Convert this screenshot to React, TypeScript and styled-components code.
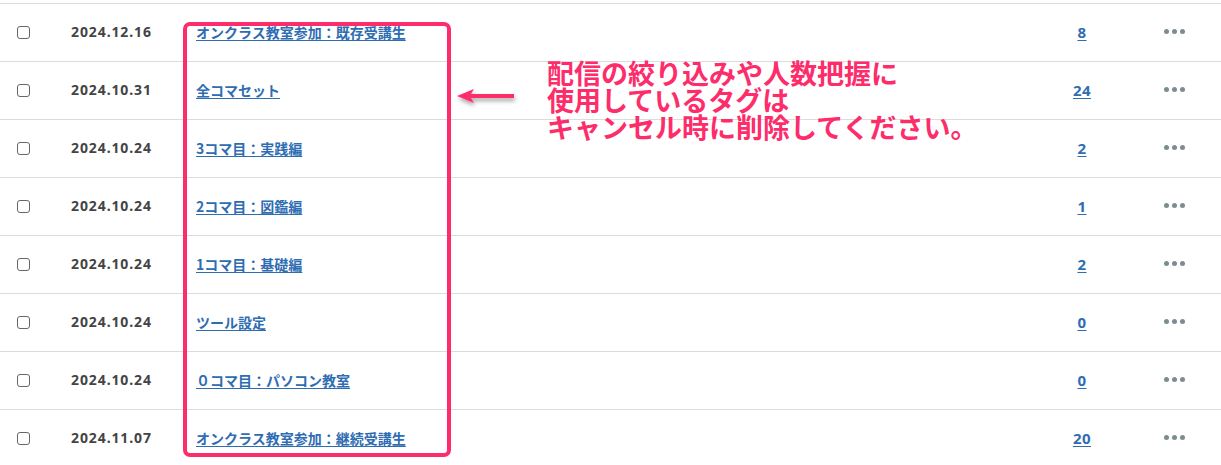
import React from 'react';
import styled, { createGlobalStyle } from 'styled-components';

const GlobalStyle = createGlobalStyle`
  html, body {
    margin: 0;
    padding: 0;
    background: #ffffff;
  }
  body {
    font-family: "Noto Sans", "Noto Sans CJK JP", sans-serif;
  }
`;

const Page = styled.div`
  position: relative;
  width: 1221px;
  height: 465px;
  overflow: hidden;
  padding-top: 3px;
  box-sizing: border-box;
`;

const Table = styled.div`
  display: flex;
  flex-direction: column;
`;

const Row = styled.div`
  display: flex;
  align-items: center;
  height: 58px;
  padding-bottom: 2px;
  border-top: 1px solid #dcdcdc;
  box-sizing: border-box;
`;

const CheckCell = styled.div`
  width: 71px;
  padding-left: 17px;
  padding-top: 2px;
  box-sizing: border-box;
  display: flex;
  align-items: center;
`;

const Check = styled.span`
  display: block;
  width: 13px;
  height: 13px;
  border: 1px solid #666;
  border-radius: 3px;
  box-sizing: border-box;
  background: #fff;
`;

const DateCell = styled.div`
  width: 125px;
  font-size: 14px;
  font-weight: 700;
  color: #444;
  letter-spacing: 0.9px;
`;

const TitleCell = styled.div`
  flex: 1;
`;

const Link = styled.a`
  font-family: "Noto Sans CJK JP", "Noto Sans", sans-serif;
  font-size: 14px;
  font-weight: 700;
  color: #2f6db3;
  text-decoration: underline;
  text-underline-offset: 2px;
  cursor: pointer;
`;

const CountCell = styled.div`
  width: 90px;
  text-align: center;
`;

const CountLink = styled(Link)`
  font-family: "Noto Sans", sans-serif;
  font-size: 15px;
  letter-spacing: 0.5px;
`;

const ActionCell = styled.div`
  width: 94px;
  display: flex;
  justify-content: center;
  gap: 3px;
`;

const Dot = styled.span`
  width: 5px;
  height: 5px;
  border-radius: 50%;
  background: #7d8c91;
`;

const Highlight = styled.div`
  position: absolute;
  left: 183px;
  top: 22px;
  width: 268px;
  height: 435px;
  border: 4px solid #fd2d6c;
  border-radius: 7px;
  box-sizing: border-box;
  pointer-events: none;
`;

const Note = styled.div`
  position: absolute;
  left: 547px;
  top: 59px;
  font-family: "Noto Sans CJK JP", sans-serif;
  font-size: 27px;
  line-height: 27px;
  font-weight: 700;
  color: #fd2d6c;
  white-space: pre;
`;

const Arrow = styled.svg`
  position: absolute;
  left: 454px;
  top: 86px;
  overflow: visible;
`;

const rows = [
  { date: '2024.12.16', title: 'オンクラス教室参加：既存受講生', count: 8 },
  { date: '2024.10.31', title: '全コマセット', count: 24 },
  { date: '2024.10.24', title: '3コマ目：実践編', count: 2 },
  { date: '2024.10.24', title: '2コマ目：図鑑編', count: 1 },
  { date: '2024.10.24', title: '1コマ目：基礎編', count: 2 },
  { date: '2024.10.24', title: 'ツール設定', count: 0 },
  { date: '2024.10.24', title: '０コマ目：パソコン教室', count: 0 },
  { date: '2024.11.07', title: 'オンクラス教室参加：継続受講生', count: 20 },
];

export default function App() {
  return (
    <Page>
      <GlobalStyle />
      <Table>
        {rows.map((r, i) => (
          <Row key={i}>
            <CheckCell><Check /></CheckCell>
            <DateCell>{r.date}</DateCell>
            <TitleCell><Link>{r.title}</Link></TitleCell>
            <CountCell><CountLink>{r.count}</CountLink></CountCell>
            <ActionCell><Dot /><Dot /><Dot /></ActionCell>
          </Row>
        ))}
      </Table>
      <Highlight />
      <Arrow width="64" height="20" viewBox="0 0 64 20">
        <defs>
          <filter id="sh" x="-20%" y="-50%" width="150%" height="250%">
            <feDropShadow dx="1" dy="3" stdDeviation="2" floodColor="#000" floodOpacity="0.35" />
          </filter>
        </defs>
        <g filter="url(#sh)">
          <polygon points="3,10 20,3 17,8 60,8 60,12 17,12 20,17" fill="#fd2d6c" />
        </g>
      </Arrow>
      <Note>{'配信の絞り込みや人数把握に\n使用しているタグは\nキャンセル時に削除してください。'}</Note>
    </Page>
  );
}
